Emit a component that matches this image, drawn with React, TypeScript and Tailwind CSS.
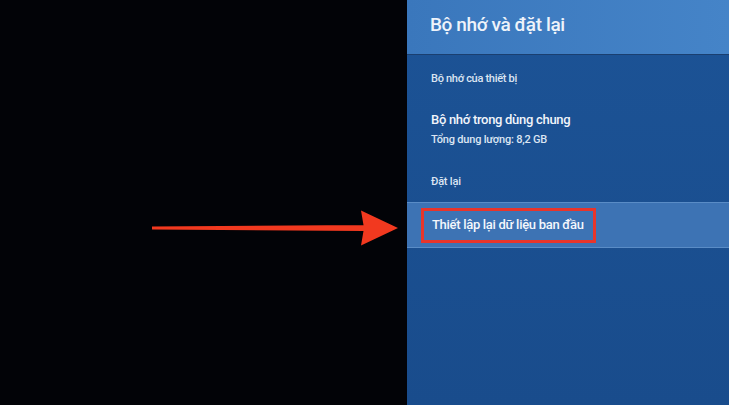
import React from 'react';

const font = { fontFamily: 'Roboto, "Noto Sans", sans-serif' };

const Arrow: React.FC = () => (
  <svg className="absolute left-[150px] top-[208px]" width="252" height="40" viewBox="0 0 252 40">
    <path d="M2 18.5 L214 17 L214 20 L211 2.5 L248 20 L211 37.5 L214 20 L214 23 L2 21.5 Z" fill="#f2391f" />
  </svg>
);

const App: React.FC = () => {
  return (
    <div className="flex w-[729px] h-[405px] overflow-hidden bg-[#020307]" style={font}>
      <div className="relative w-[407px] shrink-0 bg-[#020307]">
        <Arrow />
      </div>
      <div className="flex-1 flex flex-col bg-gradient-to-b from-[#1c5396] to-[#194c8c] shadow-[-4px_0_6px_rgba(0,0,0,0.6)]">
        <div className="h-[55px] bg-gradient-to-r from-[#3a77bc] to-[#4584c8] border-b border-[#1a3f70] flex items-center pl-[23px]">
          <h1 className="text-[19px] font-medium text-[#eef3fa] tracking-[-0.4px] pb-[4px]">Bộ nhớ và đặt lại</h1>
        </div>
        <div className="pl-[24px] pt-[16px] h-[44px] text-[11px] font-medium text-[#dbe5f2] tracking-[-0.3px]">Bộ nhớ của thiết bị</div>
        <div className="pl-[24px] pt-[12px] h-[62px]">
          <div className="text-[13px] font-medium text-[#f1f5fb] leading-[18px] tracking-[-0.3px]">Bộ nhớ trong dùng chung</div>
          <div className="text-[11px] font-medium text-[#dbe5f2] leading-[16px] mt-[3px] tracking-[-0.2px]">Tổng dung lượng: 8,2 GB</div>
        </div>
        <div className="pl-[24px] pt-[13px] h-[41px] text-[11px] font-medium text-[#dbe5f2] tracking-[-0.2px]">Đặt lại</div>
        <div className="h-[46px] bg-[#3d73b4] flex items-center pl-[14px] border-y border-[#5a8cc6]">
          <div className="border-[3px] border-[#e8352b] h-[35px] w-[175px] flex items-center pl-[8px]">
            <span className="text-[13px] font-medium text-[#f4f7fc] whitespace-nowrap tracking-[-0.3px]">Thiết lập lại dữ liệu ban đầu</span>
          </div>
        </div>
        <div className="flex-1" />
      </div>
    </div>
  );
};

export default App;
